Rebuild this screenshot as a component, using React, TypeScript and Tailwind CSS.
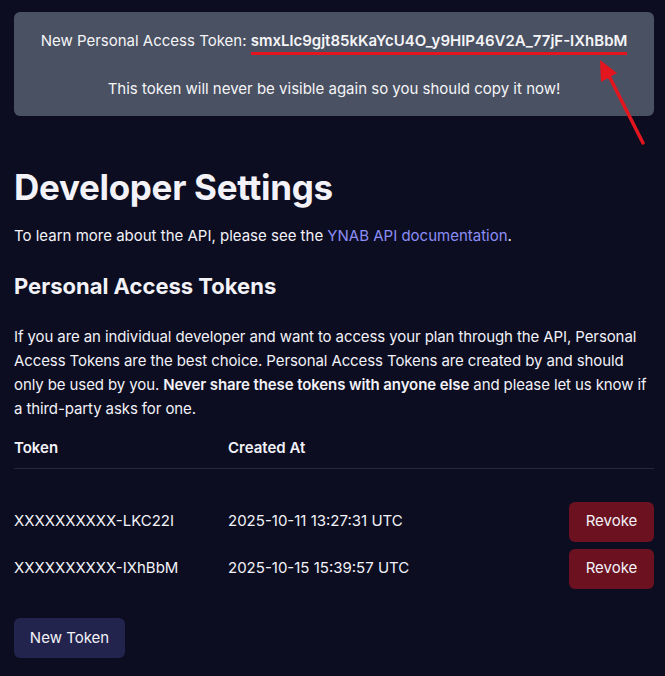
import React from "react";

export default function App() {
  return (
    <div
      className="relative min-h-[676px] bg-[#0c0d21] pl-[14px] pr-[11px] pt-[12px] text-[#f2f2f8]"
      style={{ fontFamily: "Inter, 'Noto Sans', sans-serif" }}
    >
      <div className="flex h-[104px] flex-col items-center rounded-md bg-[#4a5163] pt-[20px] text-[15px] text-[#f5f5f7]">
        <div className="leading-[18px]">
          New Personal Access Token:{" "}
          <span className="border-b-[3px] border-[#e3161f] pb-[2px] font-semibold">
            smxLlc9gjt85kKaYcU4O_y9HIP46V2A_77jF-IXhBbM
          </span>
        </div>
        <div className="mt-[30px] leading-[18px]">
          This token will never be visible again so you should copy it now!
        </div>
      </div>

      <svg
        className="pointer-events-none absolute left-[590px] top-[55px]"
        width="60"
        height="95"
        viewBox="0 0 60 95"
      >
        <line x1="53" y1="88" x2="17" y2="17" stroke="#e3161f" strokeWidth="3.5" strokeLinecap="round" />
        <polygon points="10,5 11,27 27,18" fill="#e3161f" />
      </svg>

      <h1 className="mt-[49px] text-[35px] font-bold leading-[44px] tracking-[-0.3px]">
        Developer Settings
      </h1>
      <p className="mt-[16px] text-[15px] leading-[22px]">
        To learn more about the API, please see the{" "}
        <a className="text-[#8b8ef5]">YNAB API documentation</a>.
      </p>

      <h2 className="mt-[24px] text-[22px] font-bold leading-[30px]">Personal Access Tokens</h2>

      <p className="mt-[24px] text-[15px] leading-[24px] tracking-[-0.1px]">
        If you are an individual developer and want to access your plan through the API, Personal
        Access Tokens are the best choice. Personal Access Tokens are created by and should only be
        used by you. <strong className="font-semibold">Never share these tokens with anyone else</strong> and
        please let us know if a third-party asks for one.
      </p>

      <div className="mt-[7px] text-[15px]">
        <div className="flex h-[41px] items-center border-b border-[#26273b] font-semibold">
          <div className="w-[214px]">Token</div>
          <div>Created At</div>
        </div>
        <div className="pt-[29px]">
          <div className="flex h-[47px] items-center">
            <div className="w-[214px]">XXXXXXXXXX-LKC22I</div>
            <div className="flex-1">2025-10-11 13:27:31 UTC</div>
            <button className="h-[40px] w-[85px] rounded-md bg-[#6b111f] text-[#f2f2f8]">Revoke</button>
          </div>
          <div className="flex h-[47px] items-center">
            <div className="w-[214px]">XXXXXXXXXX-IXhBbM</div>
            <div className="flex-1">2025-10-15 15:39:57 UTC</div>
            <button className="h-[40px] w-[85px] rounded-md bg-[#6b111f] text-[#f2f2f8]">Revoke</button>
          </div>
        </div>
      </div>

      <button className="mt-[26px] h-[40px] w-[111px] rounded-md bg-[#23244d] text-[15px] text-[#f2f2f8]">
        New Token
      </button>
    </div>
  );
}
